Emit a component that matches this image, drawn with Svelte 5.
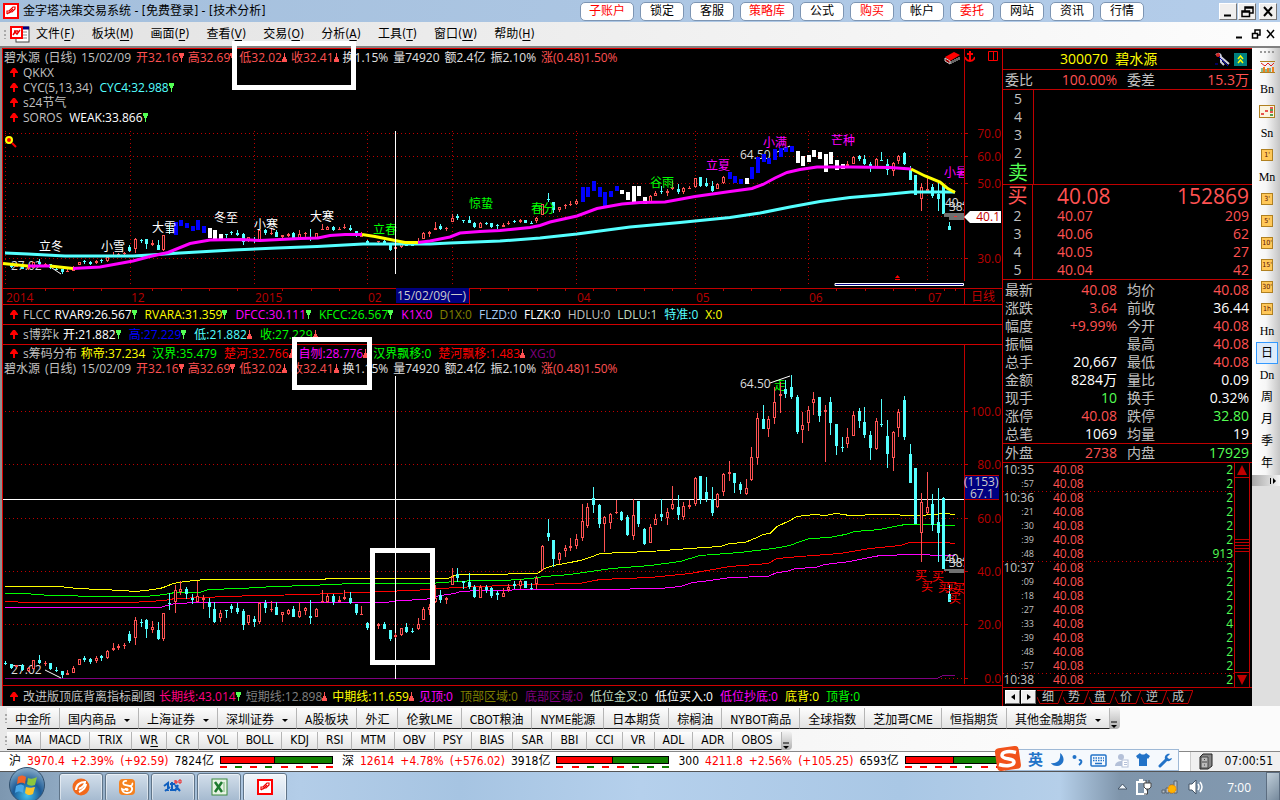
<script>
  const shortcuts = [
    ['子账户', 1], ['锁定', 0], ['客服', 0], ['策略库', 1], ['公式', 0], ['购买', 1],
    ['帐户', 0], ['委托', 1], ['网站', 0], ['资讯', 0], ['行情', 0]
  ];
  const menus = [
    ['文件', 'F'], ['板块', 'M'], ['画面', 'P'], ['查看', 'V'], ['交易', 'O'],
    ['分析', 'A'], ['工具', 'T'], ['窗口', 'W'], ['帮助', 'H']
  ];

  const silver = '#c0c0c0', white = '#fff', coral = '#ff5252', lime = '#54ff54';
  const yellow = '#ff0', magenta = '#f0f', green = '#0f0', cyan = '#54ffff', red = '#f00';

  // Segment: text, colour, direction mark, mark colour
  const quoteLine = [
    ['碧水源', silver], ['(日线)', silver], ['15/02/09', silver],
    ['开32.16', coral, 'd', coral], ['高32.69', coral, 'd', coral],
    ['低32.02', coral, 'u', coral], ['收32.41', coral, 'u', coral],
    ['换1.15%', '#e0e0e0'], ['量74920', '#e0e0e0'], ['额2.4亿', '#e0e0e0'],
    ['振2.10%', '#e0e0e0'], ['涨(0.48)1.50%', coral]
  ];
  const mainLines = [
    [['QKKX', silver]],
    [['CYC(5,13,34)', silver], ['CYC4:32.988', cyan, 'd', lime]],
    [['s24节气', silver]],
    [['SOROS', silver], ['WEAK:33.866', white, 'd', lime]]
  ];
  const flccLine = [
    ['FLCC', silver], ['RVAR9:26.567', white, 'd', lime], ['RVARA:31.359', yellow, 'd', lime],
    ['DFCC:30.111', magenta, 'd', lime], ['KFCC:26.567', green, 'd', lime], ['K1X:0', magenta],
    ['D1X:0', '#808000'], ['FLZD:0', '#a6caf0'], ['FLZK:0', white], ['HDLU:0', silver],
    ['LDLU:1', '#c0dcc0'], ['特准:0', cyan], ['X:0', yellow]
  ];
  const boyiLine = [
    ['s博弈k', silver], ['开:21.882', white, 'd', lime], ['高:27.229', '#00f', 'd', lime],
    ['低:21.882', cyan, 'u', coral], ['收:27.229', green, 'u', coral]
  ];
  const chipLine = [
    ['s筹码分布', silver], ['称帝:37.234', yellow], ['汉界:35.479', green],
    ['楚河:32.766', red, 'u', coral], ['自刎:28.776', magenta, 'u', coral],
    ['汉界飘移:0', green], ['楚河飘移:1.483', red, 'u', coral], ['XG:0', '#800080']
  ];
  const bottomLine = [
    ['改进版顶底背离指标副图', silver], ['长期线:43.014', '#ff0080', 'd', lime],
    ['短期线:12.898', '#808080', 'u', coral], ['中期线:11.659', yellow, 'u', coral],
    ['见顶:0', magenta], ['顶部区域:0', '#808000'], ['底部区域:0', '#800080'],
    ['低位金叉:0', '#c0dcc0'], ['低位买入:0', white], ['低位抄底:0', magenta],
    ['底背:0', yellow], ['顶背:0', green]
  ];

  // Daily bars on the lower pane: index, high, low, body top, body bottom, rising/falling
  const raw = `0 661 665 663 664 c;1 664 669 664 668 c;2 665 667 665 667 r;3 664 671 665 670 c;4 667 672 668 671 r;5 660 669 660 669 r;6 655 664 660 663 c;7 661 666 663 664 r;8 663 670 663 669 c;9 667 672 670 671 c;10 671 678 671 675 c;11 670 675 673 675 r;12 666 673 668 673 r;13 659 665 659 665 r;14 656 662 658 660 c;15 658 664 659 662 c;16 656 663 658 661 r;17 655 661 656 658 c;18 650 659 651 658 r;19 643 651 648 650 r;20 644 650 646 648 r;21 643 649 645 646 r;22 631 643 634 641 c;23 617 645 620 638 r;24 619 627 622 623 c;25 619 638 620 629 c;26 621 633 627 630 r;27 622 640 630 639 c;28 613 641 613 639 r;29 593 610 603 604 c;30 585 613 590 602 r;31 581 595 589 592 r;32 587 599 589 594 c;33 594 604 598 600 c;34 581 602 596 602 r;35 595 609 598 600 r;36 598 618 602 607 c;37 602 623 609 622 c;38 610 622 613 618 r;39 610 618 610 611 c;40 604 613 606 609 c;41 603 614 608 612 c;42 609 630 611 625 c;43 615 625 615 623 r;44 616 627 619 622 c;45 602 624 603 622 r;46 600 613 603 608 c;47 601 612 609 610 r;48 602 615 607 615 c;49 612 622 612 615 r;50 609 615 610 614 r;51 606 617 609 617 c;52 602 618 611 617 r;53 607 615 608 611 r;54 600 624 616 618 c;55 608 617 609 617 r;56 590 603 601 602 r;57 594 603 596 602 r;58 594 605 596 602 c;59 596 602 600 602 r;60 590 600 597 599 r;61 592 604 598 603 c;62 604 615 604 613 c;63 606 615 614 615 r;64 622 630 623 628 c;66 623 629 624 626 r;67 622 629 624 629 c;68 630 641 630 639 c;69 633 638 635 637 r;70 628 636 628 635 r;71 623 633 627 632 c;72 628 633 631 632 c;73 618 630 624 629 r;74 607 620 609 620 r;75 604 615 607 610 r;76 585 603 598 602 r;77 590 603 595 600 c;78 597 604 598 600 r;79 568 585 577 585 r;80 568 582 574 578 c;81 581 589 581 583 c;82 573 589 582 587 c;83 585 598 587 597 c;84 585 598 587 598 r;85 585 593 587 590 c;86 587 598 588 596 c;87 591 600 593 595 c;88 588 597 593 597 r;89 584 592 587 590 r;90 581 589 584 586 c;91 579 589 581 586 r;92 581 588 581 588 c;93 583 590 588 589 c;94 576 589 578 584 r;95 545 571 546 570 r;96 519 541 533 537 c;97 540 567 540 559 c;98 552 564 553 560 r;99 545 557 548 551 r;100 538 551 546 548 r;101 534 549 539 546 r;102 504 541 521 538 r;103 503 528 507 526 r;104 487 513 498 505 c;105 504 528 505 524 c;106 516 552 517 524 r;107 513 529 514 523 r;108 500 514 512 513 r;109 511 521 512 520 c;110 515 536 517 535 c;111 499 540 515 536 r;112 501 527 501 524 c;113 528 545 529 544 c;114 524 543 527 543 r;115 514 525 519 525 r;116 499 521 514 517 c;117 508 525 512 518 r;118 486 510 504 509 r;119 495 520 507 515 c;120 502 520 506 517 r;121 500 509 505 507 r;122 477 506 478 504 r;123 476 504 476 499 c;124 477 502 492 499 c;125 487 516 499 513 c;126 493 508 494 507 r;127 473 496 474 492 r;128 461 481 472 474 r;129 473 493 473 483 c;130 482 494 484 490 c;131 479 495 488 494 r;132 447 481 457 480 r;133 413 465 418 458 r;134 405 429 419 429 c;135 416 437 419 429 r;136 387 424 402 418 r;137 382 413 394 396 r;138 380 398 389 394 c;139 375 399 387 397 c;140 395 434 397 432 c;141 412 443 425 430 r;142 406 431 410 423 r;143 392 415 399 403 r;144 397 422 397 416 c;145 405 462 410 412 r;146 397 435 402 423 c;147 424 455 424 446 c;148 437 452 447 448 c;149 428 448 437 444 r;150 411 436 415 436 r;151 408 428 411 421 c;152 407 438 422 435 c;153 431 460 435 448 c;154 418 450 421 449 r;155 399 427 424 425 c;156 420 468 436 454 c;157 431 471 432 458 r;158 409 437 412 428 r;159 396 440 400 437 c;160 444 483 454 483 c;161 468 524 468 524 c;162 493 562 502 533 r;163 472 514 507 513 r;164 494 531 504 525 c;165 488 562 522 533 c;166 497 569 498 569 c;167 585 602 594 602 c`;

  const barX = (i) => Math.round(5.1 + i * 5.653) + 0.5;
  // The upper pane has a logarithmic price scale
  const logY = (y) => Math.round(258.5 - 147.6 * Math.log((27.02 + (678 - y) * 0.1237) / 30));
  const inRange = (i, ranges) => ranges.some(([a, b]) => i >= a && i <= b);
  const blueBars = [[30, 35], [102, 108], [128, 130], [132, 139]];
  const whiteBars = [[36, 38], [109, 113], [131, 131], [140, 148]];

  const bars = raw.split(';').map((row) => {
    const p = row.split(' ');
    const [i, hi, lo, top, bot] = p.slice(0, 5).map(Number);
    return { i, x: barX(i), hi, lo, top, bot: Math.max(bot, top + 1), up: p[5] === 'r' };
  });
  const logBars = bars.map((b) => {
    const top = logY(b.top);
    return {
      ...b, hi: logY(b.hi), lo: logY(b.lo), top, bot: Math.max(logY(b.bot), top + 1),
      solid: inRange(b.i, blueBars) ? '#00f' : inRange(b.i, whiteBars) ? '#fff' : ''
    };
  });

  const months = [5.5, 130.5, 254.5, 367.5, 452.5, 576.5, 695.5, 808.5, 927.5];
  const dateLabels = [[6, '2014'], [131, '12'], [255, '2015'], [368, '02'], [577, '04'], [696, '05'], [809, '06'], [928, '07']];
  const dateTicks = [45, 73, 101, 152, 181, 209, 237, 282, 311, 339, 480, 508, 537, 565, 593, 616, 644, 672, 723, 751, 780, 836, 865, 893, 915, 944, 955];
  const upperScale = [[133.5, '70.0'], [156.5, '60.0'], [183.5, '50.0'], [216.5, ''], [258.5, '30.0']];
  const lowerScale = [[411.5, '100.0'], [464.5, '80.0'], [518.5, '60.0'], [571.5, '40.0'], [624.5, '20.0'], [678.5, '0.0']];
  const terms = [
    [39, 251, '立冬', white], [101, 251, '小雪', white], [152, 232, '大雪', white], [214, 222, '冬至', white],
    [254, 229, '小寒', white], [310, 221, '大寒', white], [373, 234, '立春', green], [469, 208, '惊蛰', green],
    [531, 213, '春分', green], [650, 187, '谷雨', green], [706, 170, '立夏', magenta], [763, 147, '小满', magenta],
    [831, 145, '芒种', magenta], [944, 177, '小暑', magenta]
  ];
  const buys = [[915, 580], [932, 581], [921, 591], [938, 592], [945, 592], [953, 593], [949, 603]];

  const upperLines = [
    ['#54ffff', '5,253 28,254 65,256 133,256 150,255 180,253 233,250 277,248 317,246.5 363,244 430,244 450,243 500,241 540,238 577,234 630,227 680,222.5 730,217.5 760,213 790,207 820,201.5 850,197.5 880,195 911,192 955,192'],
    ['#ff0', '3,263.5 28,266'], ['#f0f', '28,266 50,266'], ['#ff0', '50,266 73,268.5'],
    ['#f0f', '73,268.5 100,267 133,261 150,256.5 168,252.5 190,243.5 210,240 240,239.5 260,240.5 300,238.5 318,238 330,235.5 345,234.5 362,234.5'],
    ['#ff0', '362,234.5 375,236.5 390,239.5 405,242.5 418,242.5'],
    ['#f0f', '418,242.5 430,241 450,237 460,233 480,231.5 500,230.5 530,227.5 540,225.5 550,222 577,216 597,208.5 622,204 640,202.5 665,202 695,196.5 730,191.5 752,188.5 763,184.5 775,178 787,172.5 800,169.5 817,167 850,167 890,167.5 911,169'],
    ['#ff0', '911,169 925,176 940,182 947,188 955,192.5']
  ];
  const lowerLines = [
    ['#ff0', '5,586 60,586 77,588 100,589 123,590 135,591 145,590 160,588 166,586 173,583 185,581 205,579 325,579 326,578 448,578 457,574 480,574 537,573 545,568 553,565 565,563 580,560 590,557 600,553 650,551 690,548 720,546 730,543 745,542 757,537 763,534 770,533 777,526 790,520 797,516 815,514 825,515 836,513 850,515 880,514 920,515 945,513 955,514'],
    ['#0f0', '5,593 25,593 50,595 105,596 145,596 165,594 175,592 200,592 208,589 240,588 275,586 310,585 330,584 355,583 430,583 455,581 480,580 505,580 530,578 545,576 570,574 590,571 612,568 650,565 680,561 700,555 740,552 765,549 780,547 790,545 800,541 810,538 830,537 845,534 855,531 880,529 905,524 925,524 955,525'],
    ['#f00', '5,601 30,602 130,602 165,600 175,598 205,597 225,596 260,595 310,594 330,593 385,591 410,590 430,589 455,587 480,586 530,584 580,583 600,579 650,577 690,573 730,566 768,563 777,558 800,556 840,553 870,548 900,545 910,542 945,542 955,543'],
    ['#f0f', '5,607 160,607 167,605 175,603 200,602 385,602 400,600 425,599 440,595 455,593 460,591 480,590 545,589 600,589 660,588 680,586 693,582 710,580 730,577 768,576 777,572 787,571 795,568 815,567 825,564 850,561 880,555 915,554 945,555 955,555'],
    ['#800080', '5,678 937,678 943,675 955,675']
  ];

  const bids = [['2', '40.07', '209'], ['3', '40.06', '62'], ['4', '40.05', '27'], ['5', '40.04', '42']];
  const stats = [
    ['最新', '40.08', 'up', '均价', '40.08', 'up'], ['涨跌', '3.64', 'up', '前收', '36.44', 'flat'],
    ['幅度', '+9.99%', 'up', '今开', '40.08', 'up'], ['振幅', '', 'up', '最高', '40.08', 'up'],
    ['总手', '20,667', 'flat', '最低', '40.08', 'up'], ['金额', '8284万', 'flat', '量比', '0.09', 'flat'],
    ['现手', '10', 'down', '换手', '0.32%', 'flat'], ['涨停', '40.08', 'up', '跌停', '32.80', 'down'],
    ['总笔', '1069', 'flat', '均量', '19', 'flat']
  ];
  const ticks = [
    ['10:35', '2'], [':57', '2'], ['10:36', '2'], [':21', '2'], [':30', '2'], [':39', '2'], [':48', '913'],
    ['10:37', '2'], [':09', '2'], [':18', '2'], [':27', '2'], [':33', '4'], [':39', '2'], [':48', '2'],
    [':57', '2'], ['10:38', '2']
  ];
  const periods = ['~chart', 'Bn', '~table', 'Sn', "#1'", 'Mn', "#3'", "#5'", "#10'", "#15'", "#30'", '#1h', 'Hn', '日', 'Dn', '周', '月', '季', '年'];

  const markets = [
    ['中金所'], ['国内商品', 1], ['上海证券', 1], ['深圳证券', 1], ['A股板块'], ['外汇'], ['伦敦LME'], ['CBOT粮油'],
    ['NYME能源'], ['日本期货'], ['棕榈油'], ['NYBOT商品'], ['全球指数'], ['芝加哥CME'], ['恒指期货'], ['其他金融期货', 1]
  ];
  const indicators = ['MA', 'MACD', 'TRIX', 'WR', 'CR', 'VOL', 'BOLL', 'KDJ', 'RSI', 'MTM', 'OBV', 'PSY', 'BIAS', 'SAR', 'BBI', 'CCI', 'VR', 'ADL', 'ADR', 'OBOS'];
  const indices = [
    ['沪', '3970.4', '+2.39%', '(+92.59)', '7824亿', 49, 'rgrgrrrr'],
    ['深', '12614', '+4.78%', '(+576.02)', '3918亿', 50, 'rrgrrggg'],
    ['300', '4211.8', '+2.56%', '(+105.25)', '6593亿', 43, 'rrrrgrrr']
  ];
</script>

{#snippet line(segs, kind)}
  <div class="line {kind}">
    {#if kind !== 'plain'}
      <svg class="arrow" width="8" height="9" viewBox="0 0 8 9"><path d="M3 0H5L8 4V5H5V9H3V5H0V4Z" fill="#f00" /></svg>
    {/if}
    {#each segs as [text, color, mark, markColor]}
      <span class:marked={mark} style:color>{text}{#if mark}<svg width="5" height="9" viewBox="0 0 5 9">
            {#if mark === 'd'}<path d="M0 0H5V3H4V5H3V9H2V5H1V3H0Z" fill={markColor} />{/if}
            {#if mark === 'u'}<path d="M2 0H3V4H4V6H5V9H0V6H1V4H2Z" fill={markColor} />{/if}
          </svg>{/if}</span>
    {/each}
  </div>
{/snippet}

{#snippet logo(size)}
  <svg width={size} height={size} viewBox="0 0 16 16">
    <rect width="16" height="16" fill="#f00" /><rect x="2" y="2" width="12" height="12" fill="#fff" />
    <path d="M4 11V8H6L10 4H12V6L9 9H7L4 11" fill="none" stroke="#e00" stroke-width="1.2" />
    <path d="M6 10L10 6" stroke="#e00" stroke-width="1.5" />
  </svg>
{/snippet}

{#snippet candles(list)}
  {#each list as b}
    {#if b.solid}
      <rect x={b.x - 1.5} y={b.hi} width="4" height={b.lo - b.hi} fill={b.solid} />
    {:else if b.up}
      <path d="M{b.x} {b.hi}V{b.top}M{b.x} {b.bot}V{b.lo}" stroke="#ff5252" />
      {#if b.bot - b.top < 3}
        <rect x={b.x - 1.5} y={b.top} width="3" height={b.bot - b.top} fill="#ff5252" />
      {:else}
        <rect x={b.x - 1} y={b.top + 0.5} width="2" height={b.bot - b.top - 1} fill="#000" stroke="#ff5252" />
      {/if}
    {:else}
      <path d="M{b.x} {b.hi}V{b.lo}" stroke="#54ffff" />
      <rect x={b.x - 1.5} y={b.top} width="3" height={b.bot - b.top} fill="#54ffff" />
    {/if}
  {/each}
{/snippet}

<main>
  <header class="title">
    {@render logo(16)}
    <h1>金字塔决策交易系统 - [免费登录] - [技术分析]</h1>
    <nav class="shortcuts">
      {#each shortcuts as [name, hot]}<button class:hot={hot}>{name}</button>{/each}
    </nav>
    <div class="window-buttons">
      <button aria-label="最小化"><svg width="16" height="15"><path d="M4 11.500H11" stroke="#000" stroke-width="2" /></svg></button>
      <button aria-label="还原"><svg width="16" height="15"><path d="M6 7V3H14V9H11M6 4H14M3 7H10.500V12.500H3ZM3 8H11" fill="none" stroke="#000" stroke-width="1.500" /></svg></button>
      <button class="apart" aria-label="关闭"><svg width="16" height="15"><path d="M4 3L12 12M12 3L4 12" stroke="#000" stroke-width="2" /></svg></button>
    </div>
  </header>

  <nav class="menu">
    <i class="grip"></i>
    <svg width="20" height="17" viewBox="0 0 20 17">
      <rect x="6" y="1" width="13" height="15" fill="#fff" stroke="#444" /><path d="M5 2H19" stroke="#000080" stroke-width="3" />
      <path d="M13 6H17M13 9H17M13 12H17" stroke="#888" />
      <rect x="1" y="1" width="11" height="11" fill="#fff" stroke="#f00" stroke-width="2" />
      <path d="M3 9L5 6L7 8L10 4M4 5H8" stroke="#e00" fill="none" stroke-width="1.500" />
    </svg>
    <div class="menu-items">
      {#each menus as [name, key]}<button>{name}(<u>{key}</u>)</button>{/each}
    </div>
    <svg class="mdi" width="40" height="12" viewBox="0 0 40 12">
      <path d="M1 9.500H7" stroke="#000" stroke-width="2" />
      <path d="M20 5V2H25V7H23M17.500 5.500H22.500V10H17.500ZM20 2H25" fill="none" stroke="#000" stroke-width="1.500" />
      <path d="M32 2L39 10M39 2L32 10" stroke="#000" stroke-width="1.500" />
    </svg>
  </nav>

  <div class="workspace">
    <section class="chart">
      <div class="head">
        <div class="head-lines">
          {@render line(quoteLine, 'plain')}
          {#each mainLines as segs}{@render line(segs, 'main')}{/each}
          <svg class="chip" width="17" height="13" viewBox="0 0 17 13">
            <path d="M1 5L10 0L16 3L6 9Z" fill="#f00" /><path d="M1 6V9L6 12V9ZM7 9V12M9 8V11M11 7V10M13 6V9M15 5V8" stroke="#ccc" fill="#900" />
          </svg>
        </div>
        <div class="head-side">
          <svg width="10" height="11" viewBox="0 0 10 11"><path d="M5 0V10M2 3H8M0 6C1 9 3 10 5 10S9 9 10 6" fill="none" stroke="#f00" stroke-width="2" /></svg>
          <svg width="10" height="10" viewBox="0 0 10 10"><path d="M.5.5H9.500V9.500H.5ZM5.500 0V10" fill="none" stroke="#f00" /></svg>
        </div>
      </div>

      <svg class="plot" viewBox="3 126 999 178" role="img" aria-label="日线主图">
        <g stroke="#c00000" stroke-dasharray="1 3">
          {#each upperScale as [y]}<path d="M5 {y}H964" />{/each}
          {#each months as x}<path d="M{x} 131V287" />{/each}
        </g>
        <g stroke="#c00000">
          <path d="M3 288.500H1002M964.500 126V281M964.500 289V304" />
          {#each upperScale as [y]}<path d="M964 {y}H968" />{/each}
          {#each dateTicks as x}<path d="M{x + 0.5} 288V291" />{/each}
        </g>
        <g fill="#b80000">
          {#each upperScale as [y, label]}<text x="1001" y={y + 4} text-anchor="end">{label}</text>{/each}
          {#each dateLabels as [x, label]}<text {x} y="302">{label}</text>{/each}
          <text x="971" y="301" fill="#c00000">日线</text>
        </g>
        <circle cx="9" cy="140" r="3" fill="#f00" stroke="#ff0" stroke-width="2" /><path d="M12 143L16 147" stroke="#f00" stroke-width="2" />
        <text x="11" y="270" fill="#ddd">27.02</text>
        <text x="740" y="159" fill="#ddd">64.50</text>
        <path d="M49 266L61 274M775 153L790 146" stroke="#fff" />
        {@render candles(logBars)}
        {#each upperLines as [color, points]}<polyline {points} fill="none" stroke={color} stroke-width="3" />{/each}
        <svg x="3" y="126" width="961" height="178" viewBox="3 126 961 178">
          {#each terms as [x, y, label, fill]}<text {x} {y} {fill}>{label}</text>{/each}
          <text x="945" y="207" fill="#ddd">40.4</text><text x="949" y="211" fill="#ddd">38.</text>
        </svg>
        <path d="M944 213H964V220H949V217H944Z" fill="#707070" /><path d="M954 216.500H957" stroke="#f33" />
        <path d="M395.500 131V274" stroke="#fff" />
        <path d="M835 283.500H963.500V285.500H835Z" fill="#000080" stroke="#fff" />
        <path d="M895 278L897.500 275L900 278ZM895 279H900V280H895Z" fill="#f00" />
        <path d="M964 217L970 211H1001V223H970Z" fill="#fff" /><text x="1000" y="221" fill="#c00000" text-anchor="end">40.1</text>
        <rect x="396" y="288" width="73" height="15" fill="#000080" /><path d="M469.500 288V304" stroke="#c00000" />
        <text x="397" y="300" fill="#ccc">15/02/09(一)</text>
      </svg>

      <div class="band">{@render line(flccLine, 'loose')}</div>
      <div class="band">{@render line(boyiLine, 'loose')}</div>
      <div class="band double">
        <div class="double-lines">{@render line(chipLine, 'dense')}{@render line(quoteLine, 'plain')}</div>
        <div class="double-side"></div>
      </div>

      <svg class="plot" viewBox="3 376 999 309" role="img" aria-label="筹码分布副图">
        <g stroke="#c00000">
          <g stroke-dasharray="1 3">{#each lowerScale as [y]}<path d="M5 {y}H964" />{/each}</g>
          <path d="M964.500 376V684" />
          {#each lowerScale as [y]}<path d="M964 {y}H968" />{/each}
        </g>
        {#each lowerScale as [y, label]}<text x="1001" y={y + 4} text-anchor="end" fill="#b80000">{label}</text>{/each}
        <g shape-rendering="crispEdges">
          {#each lowerLines as [color, points]}<polyline {points} fill="none" stroke={color} transform="translate(0 .5)" />{/each}
        </g>
        <path d="M3 499.500H964M395.500 376V679" stroke="#fff" />
        <text x="11" y="674" fill="#ddd">27.02</text><text x="740" y="388" fill="#ddd">64.50</text>
        <text x="774" y="390" fill={green}>走</text>
        <path d="M45 670L61 678M770 383L790 376" stroke="#fff" />
        {@render candles(bars)}
        <svg x="3" y="376" width="961" height="309" viewBox="3 376 961 309">
          {#each buys as [x, y]}<text {x} {y} fill="#f00">买</text>{/each}
          <text x="945" y="563" fill="#ddd">40.4</text><text x="949" y="567" fill="#ddd">38.</text>
        </svg>
        <path d="M944 569H964V573H949V571H944Z" fill="#707070" />
        <rect x="965" y="475" width="34" height="25" fill="#000080" /><path d="M965 475.500H999M965 499.500H999" stroke="#c00000" />
        <text x="964" y="486" fill="#ccc">(1153)</text><text x="970" y="498" fill="#ccc">67.1</text>
        <rect x="372.500" y="550.500" width="60" height="112" fill="none" stroke="#fff" stroke-width="5" />
      </svg>

      <div class="band last">{@render line(bottomLine, 'dense')}</div>
      <div class="mark-box first"></div>
      <div class="mark-box second"></div>
    </section>

    <aside class="quote">
      <div class="symbol">
        <span></span><h2>300070&nbsp; 碧水源</h2>
        <svg width="38" height="15" viewBox="0 0 38 15">
          <path d="M2 3C5 0 7 3 7 5L15 12M7 5V10L10 13" stroke="#ccd" stroke-width="2" fill="none" /><path d="M4 4L14 14M1 12H4" stroke="#0000c0" fill="none" /><circle cx="4" cy="3" r="2" fill="#d02020" />
          <rect x="20" y="1" width="13" height="13" fill="#008080" /><path d="M24 7L26.500 4L29 7M24 11L26.500 8L29 11" stroke="#ff0" stroke-width="1.500" fill="none" />
        </svg>
      </div>
      <div class="pair committee"><span>委比</span><b class="up">100.00%</b><span>委差</span><b class="up">15.3万</b></div>
      <div class="asks">
        <div class="levels"><span>5</span><span>4</span><span>3</span><span>2</span><span class="sell">卖</span></div>
      </div>
      <div class="bids">
        <div class="bid top"><span>买</span><b>40.08</b><b>152869</b></div>
        {#each bids as [n, p, v]}<div class="bid"><span>{n}</span><b>{p}</b><b>{v}</b></div>{/each}
      </div>
      <div class="stats">
        {#each stats as [a, av, ac, b, bv, bc]}
          <div class="pair"><span>{a}</span><b class={ac}>{av}</b><span>{b}</span><b class={bc}>{bv}</b></div>
        {/each}
      </div>
      <div class="pair totals"><span>外盘</span><b class="up">2738</b><span>内盘</span><b class="down">17929</b></div>
      <div class="tape">
        <table>
          <tbody>
            {#each ticks as [t, v]}
              <tr class:minute={t[0] !== ':' && t !== '10:35'}>
                <td class="time" class:second={t[0] === ':'}>{t}</td><td class="price">40.08</td><td class="vol">{v}</td>
              </tr>
            {/each}
          </tbody>
        </table>
        <div class="scroll">
          <button aria-label="向上"><svg width="10" height="10" viewBox="0 0 10 10"><path d="M5 0L10 10H0Z" fill="#c00000" /></svg></button>
          <div class="thumb"></div>
          <button aria-label="向下"><svg width="10" height="10" viewBox="0 0 10 10"><path d="M0 0H10L5 10Z" fill="#c00000" /></svg></button>
        </div>
      </div>
      <nav class="sheet-tabs">
        <button class="step" aria-label="上一页"><svg width="4" height="6"><path d="M4 0V6L0 3Z" /></svg></button>
        <button class="step" aria-label="下一页"><svg width="4" height="6"><path d="M0 0V6L4 3Z" /></svg></button>
        <div class="sheets">
          {#each ['细', '势', '盘', '价', '逆', '成'] as s}
            <button><svg width="26" height="16" viewBox="0 0 26 16"><path d="M0 8L3 14.500H21L26 1M0 1.500H26" fill="none" stroke="#c00000" /></svg><span>{s}</span></button>
          {/each}
        </div>
      </nav>
    </aside>

    <aside class="periods">
      <div class="period-list">
        <i class="hgrip"></i>
        {#each periods as p}
          <button class:active={p === '日'} aria-label={p.replace(/[~#]/, '')}>
            {#if p === '~chart'}
              <svg width="15" height="12" viewBox="0 0 15 12"><path d="M0 .5H15M0 11.500H15" stroke="#b08020" /><path d="M1 2L5 5L8 2L11 5L14 2" fill="none" stroke="#e02020" /><path d="M2 7V11M6 8V11M10 7V11" stroke="#208020" /><path d="M4 6V11M8 7V11M13 6V11" stroke="#f08020" stroke-width="2" /></svg>
            {:else if p === '~table'}
              <svg width="16" height="13" viewBox="0 0 16 13"><rect x=".5" y=".5" width="15" height="12" fill="#fbf5df" stroke="#b08020" /><path d="M2 9H5M6 6H9M11 3H14M11 7H14" stroke="#e02020" stroke-width="1.500" /><path d="M11 5H14M11 10H14" stroke="#208020" stroke-width="1.500" /></svg>
            {:else if p[0] === '#'}
              <span class="minute-icon">{p.slice(1)}</span>
            {:else}{p}{/if}
          </button>
        {/each}
      </div>
      <div class="period-end"><svg width="7" height="6"><path d="M.5 0V6" stroke="#000" /><path d="M3 0V6L6 3Z" /></svg></div>
    </aside>
  </div>

  <nav class="tabs markets">
    <i class="grip"></i>
    {#each markets as [name, drop]}
      <button>{name}{#if drop}<svg width="6" height="3"><path d="M0 0H6L3 3Z" /></svg>{/if}</button>
    {/each}
    <span class="more"><svg width="7" height="8"><path d="M0 1H6" stroke="#000" /><path d="M0 4H6L3 7Z" /></svg></span>
  </nav>
  <nav class="tabs indicators">
    <i class="grip"></i>
    {#each indicators as name}
      <button>{#if name === 'WR'}<span>W<u>R</u></span>{:else}{name}{/if}</button>
    {/each}
    <span class="more"><svg width="7" height="8"><path d="M0 1H6" stroke="#000" /><path d="M0 4H6L3 7Z" /></svg></span>
  </nav>

  <footer class="status">
    {#each indices as [name, price, pct, diff, amount, share, dashes]}
      <div class="index">
        <span>{name}</span><em>{price}</em><em>{pct}</em><em>{diff}</em><span>{amount}</span>
        <div class="gauge">
          <div class="ratio"><div style:width="{share}%"></div></div>
          <div class="dashes">{#each dashes as d}<i class:g={d === 'g'}></i>{/each}</div>
        </div>
      </div>
    {/each}
    <div class="status-end">
      <svg width="14" height="17" viewBox="0 0 14 17"><path d="M1 4L4 1H13V13L9 16H1Z" fill="#888" stroke="#222" /><path d="M2 4H9V15H2ZM3 9H8M5 6.500H6M5 12H6" fill="#bbb" stroke="#444" /></svg>
      <time>07:00:51</time>
    </div>
    <div class="ime">
      <svg class="sogou" width="28" height="28" viewBox="0 0 28 28"><rect x="2" y="2" width="24" height="23" rx="4" fill="#f1521b" transform="rotate(-8 14 14)" /><path d="M22 7.500C16 6 8 6 8 10.500C8 15 20 12.500 20 17C20 21 12 21.500 5 19.500" fill="none" stroke="#fff" stroke-width="3.500" /></svg>
      <strong>英</strong>
      <svg width="14" height="14" viewBox="0 0 14 14"><path d="M9 0C15 4 13 13 6 13C3 13 1 12 0 10C7 11 10 6 9 0Z" fill="#2273c8" /></svg>
      <svg width="11" height="12" viewBox="0 0 11 12"><circle cx="2.500" cy="3" r="2" fill="#2273c8" /><path d="M7 6.500C9 5 11 8 7 11" fill="none" stroke="#2273c8" stroke-width="2" /></svg>
      <svg width="17" height="13" viewBox="0 0 17 13"><rect x="1" y="1" width="15" height="11" rx="1" fill="none" stroke="#2273c8" stroke-width="1.500" /><path d="M3 4H14M3 6.500H14" stroke="#2273c8" stroke-width="1.500" stroke-dasharray="1.500 1" /><path d="M5 9.500H12" stroke="#2273c8" stroke-width="1.500" /></svg>
      <svg width="14" height="15" viewBox="0 0 14 15"><circle cx="6" cy="4" r="3" fill="#b3c0d8" /><path d="M0 13C0 7 10 7 10 10V13Z" fill="#b3c0d8" /><rect x="7" y="7" width="6" height="7" fill="#fff" stroke="#b3c0d8" /><path d="M9 9.500H12M9 11.500H12" stroke="#b3c0d8" /></svg>
      <svg width="14" height="14" viewBox="0 0 14 14"><path d="M4 0C5 2 9 2 10 0L14 3L12 6L11 5V13H3V5L2 6L0 3Z" fill="#2273c8" /></svg>
      <svg width="15" height="15" viewBox="0 0 15 15"><path d="M2 13L8 7" stroke="#2273c8" stroke-width="3" stroke-linecap="round" /><path d="M12 1C9 0 6 3 7 6C8 9 13 9 14 5L11 6L9 4Z" fill="#2273c8" /></svg>
    </div>
  </footer>

  <footer class="taskbar">
    <button class="start" aria-label="开始">
      <svg width="40" height="38" viewBox="0 0 40 38">
        <defs><radialGradient id="orb" cx=".5" cy=".8" r=".8"><stop offset="0" stop-color="#3fc0f0" /><stop offset=".5" stop-color="#1c5a96" /><stop offset="1" stop-color="#8fb2cc" /></radialGradient></defs>
        <circle cx="20" cy="19" r="17.500" fill="url(#orb)" stroke="#31506e" />
        <path d="M11 11C14 9 16 9 19 11L18 18C15 16 13 17 10 18Z" fill="#f0642a" /><path d="M21 12C24 13 26 13 30 11L28 19C25 20 22 20 20 18Z" fill="#8cc63e" />
        <path d="M9 20C12 18 15 18 17 20L16 27C13 25 11 25 8 27Z" fill="#4aa8e8" /><path d="M19 21C22 22 24 22 28 21L26 28C23 30 20 29 18 27Z" fill="#fbc52c" />
      </svg>
    </button>
    <div class="apps">
      <button aria-label="应用"><svg width="18" height="18" viewBox="0 0 18 18"><circle cx="9" cy="9" r="8.500" fill="#f2691c" /><path d="M4 12C4 7 8 4 13 4C13 6 11 9 7 11M7 14C11 12 14 9 14 6" stroke="#fff" stroke-width="2" fill="none" /></svg></button>
      <button aria-label="UC"><svg width="18" height="18" viewBox="0 0 18 18"><rect x="1" y="1" width="16" height="16" rx="4" fill="#f58220" /><path d="M9 3C5 2 4 6 7 7L12 8C16 10 14 15 9 15C6 15 4 13 4 11C6 12 8 12 8 10M12 8C14 8 15 6 14 5" stroke="#fff" stroke-width="1.800" fill="none" /><circle cx="9" cy="11.500" r="1.500" fill="#fff" /></svg></button>
      <button aria-label="期货"><svg width="20" height="18" viewBox="0 0 20 18"><path d="M1 8L5 5V13M2 13L7 9M7 6H12M9 4V12M7 12H12M12 7L17 13M12 13L15 7" stroke="#1060c0" stroke-width="2" fill="none" /><path d="M12 2V5H14V3H12M16 2H18V5H16Z" stroke="#f02020" fill="none" /></svg></button>
      <button aria-label="Excel"><svg width="17" height="18" viewBox="0 0 17 18"><rect x="1" y="1" width="15" height="16" fill="#e8f3e4" stroke="#3b8a3e" /><path d="M4 4L11 14M11 4L4 14" stroke="#1e7a2e" stroke-width="2.500" /><path d="M13 4V14" stroke="#7ab87a" /></svg></button>
      <button class="current" aria-label="金字塔">{@render logo(16)}</button>
    </div>
    <div class="tray">
      <svg width="9" height="6"><path d="M0 5L4.500 0L9 5Z" fill="#eef4fa" stroke="#456" /></svg>
      <svg width="16" height="16" viewBox="0 0 16 16"><rect x="1" y="3" width="8" height="12" fill="none" stroke="#fff" stroke-width="2" /><path d="M3 1H7" stroke="#fff" stroke-width="2" /><path d="M8 4H15V8L13 10H10L8 8ZM10 1V4M13 1V4M11.500 10V15H8" fill="#fff" stroke="#444" /></svg>
      <svg width="18" height="16" viewBox="0 0 18 16"><path d="M1 14V11H4V14ZM5 14V9H8V14ZM9 14V6H12V14ZM13 14V2H16V14Z" fill="#b8c0c8" stroke="#59636d" /><circle cx="11" cy="10" r="4" fill="#ffb400" stroke="#f08a00" stroke-dasharray="2 1" /></svg>
      <svg width="16" height="16" viewBox="0 0 16 16"><path d="M1 5H4L8 1V15L4 11H1Z" fill="#fff" stroke="#456" /><path d="M10 5Q12 8 10 11M12 3Q16 8 12 13" fill="none" stroke="#fff" stroke-width="1.500" /></svg>
      <time>7:00</time>
      <button class="desktop" aria-label="显示桌面"></button>
    </div>
  </footer>
</main>

<style>
  :global(body) { margin: 0; background: #dfdfdf; }
  main {
    display: flex; flex-direction: column; font: 12px/15px "DejaVu Sans Condensed", "Noto Sans CJK SC", sans-serif; color: #000;
    overflow: hidden;
  }
  button { font: inherit; color: inherit; background: none; border: 0; padding: 0; margin: 0; }
  h1, h2 { margin: 0; font: inherit; white-space: nowrap; }
  b, em { font-weight: normal; font-style: normal; }
  svg { flex: none; display: block; }

  .title {
    display: flex; align-items: center; height: 22px; padding: 0 3px; box-sizing: border-box;
    background: linear-gradient(90deg, #a4bfdc, #b4cdea);
  }
  .title h1 { flex: 1; margin-left: 4px; }
  .shortcuts { display: flex; gap: 6px; margin-right: 75px; }
  .shortcuts button {
    height: 19px; min-width: 44px; padding: 0 8px; background: #fff; border: 1px solid #7d95b3; border-radius: 5px; white-space: nowrap;
  }
  .shortcuts .hot { color: #f00; }
  .window-buttons { display: flex; gap: 1px; }
  .window-buttons button {
    width: 18px; height: 17px; background: #f0efee; border: 1px solid; border-color: #fff #777 #777 #fff;
  }
  .window-buttons .apart { margin-left: 2px; }

  .grip { flex: none; width: 2px; height: 9px; background: repeating-linear-gradient(#aaa 0 2px, transparent 2px 4px); }
  .menu {
    display: flex; align-items: center; height: 24px; padding: 0 5px 0 4px; border-bottom: 2px solid #808080;
    background: linear-gradient(90deg, #e2e2e2, #fdfdfd);
  }
  .menu > svg:first-of-type { margin-left: 4px; }
  .menu-items { flex: 1; display: flex; gap: 17px; margin-left: 6px; }
  .menu-items button { white-space: nowrap; }
  u { text-underline-offset: 2px; }

  .workspace { display: flex; padding-left: 2px; background: #909090; }
  .chart {
    flex: 1; min-width: 0; position: relative; background: #000; border: solid #e00000; border-width: 1px 0 0 1px;
    font-family: "Open Sans", "Noto Sans CJK SC", sans-serif;
  }
  .head, .double { display: flex; }
  .head-lines { flex: 1; min-width: 0; padding: 1px 0; border-right: 1px solid #c00000; position: relative; }
  .head-side { flex: none; width: 37px; display: flex; justify-content: space-between; box-sizing: border-box; padding: 2px 4px 0 0; }
  .chip { position: absolute; right: 3px; top: 3px; }
  .line { display: flex; align-items: center; height: 15px; padding-left: 7px; white-space: nowrap; line-height: 15px; }
  .line.plain { padding-left: 1px; }
  .line .arrow { margin-right: 5px; }
  .line span { display: flex; align-items: center; margin-right: 7px; }
  .line span.marked { margin-right: 5px; }
  .line span:first-of-type { margin-right: 4px; }
  .plain span, .plain span:first-of-type { margin-right: 5px; }
  .plain span.marked { margin-right: 4px; }
  .loose span.marked { margin-right: 8px; }
  .main span:first-of-type { margin-right: 7px; }
  .plot { width: 100%; height: auto; font-size: 12px; overflow: visible; }
  .band { border-top: 1px solid #d00000; height: 19px; display: flex; align-items: center; overflow: hidden; }
  .band.double { height: auto; align-items: stretch; }
  .double-lines { flex: 1; min-width: 0; padding-top: 1px; border-right: 1px solid #c00000; }
  .double-side { flex: none; width: 37px; }
  .band.last { height: 20px; }
  .mark-box { position: absolute; border: 5px solid #fff; box-sizing: border-box; }
  .mark-box.first { left: 229px; top: -8px; width: 124px; height: 49px; }
  .mark-box.second { left: 289px; top: 288px; width: 80px; height: 53px; }

  .quote {
    flex: none; width: 249px; display: flex; flex-direction: column; background: #000; color: #c0c0c0;
    border: solid #d00000; border-width: 1px 0 0 1px; font: 14px/18px "Open Sans", "Noto Sans CJK SC", sans-serif;
  }
  .symbol { display: grid; grid-template-columns: 57px 1fr auto; align-items: center; height: 20px; color: #ff0; border-bottom: 1px solid #c00000; }
  .pair { display: grid; grid-template-columns: 30px 82px 40px 1fr; padding: 0 3px 0 2px; height: 18px; align-items: center; white-space: nowrap; }
  .pair b { text-align: right; }
  .pair span:nth-of-type(2) { padding-left: 10px; }
  .pair.committee { height: 19px; border-bottom: 1px solid #c00000; }
  .up { color: #ff5252; }
  .down { color: #54ff54; }
  .flat { color: #fff; }
  .asks { border-bottom: 1px solid #c00000; }
  .levels { width: 30px; border-right: 1px solid #c00000; display: flex; flex-direction: column; text-align: center; }
  .levels .sell { font-size: 20px; line-height: 22px; color: #54ff54; }
  .bids { border-bottom: 1px solid #c00000; }
  .bid { display: grid; grid-template-columns: 30px 1fr auto; padding-right: 3px; color: #ff5252; line-height: 18px; }
  .bid span { border-right: 1px solid #c00000; text-align: center; color: #c0c0c0; }
  .bid b:first-of-type { padding-left: 24px; }
  .bid.top { font-size: 21px; line-height: 22px; }
  .bid.top span { color: #ff5252; font-size: 20px; }
  .stats { padding: 1px 0 0; border-bottom: 1px solid #c00000; }
  .pair.totals { border-bottom: 1px solid #c00000; }
  .tape { display: flex; padding-right: 2px; border-bottom: 1px solid #c00000; }
  table { flex: 1; border-collapse: collapse; font-size: 12px; line-height: 14px; }
  td { padding: 0; height: 14px; }
  .minute td { background: repeating-linear-gradient(90deg, #c00000 0 1px, transparent 1px 4px) top / 100% 1px no-repeat; }
  .time { width: 31px; text-align: right; }
  .time.second { font-size: 9px; }
  .price { padding-left: 19px; color: #ff5252; }
  .vol { text-align: right; color: #54ff54; padding-right: 1px; }
  .scroll { width: 14px; border: solid #c00000; border-width: 0 1px; display: flex; flex-direction: column; justify-content: space-between; }
  .scroll button { height: 15px; display: grid; place-items: center; border: solid #c00000; border-width: 0 0 1px; }
  .scroll button:last-child { border-width: 1px 0 0; }
  .thumb { height: 13px; margin-bottom: 60px; background: repeating-linear-gradient(#c00000 0 1px, transparent 1px 3px); }
  .sheet-tabs { display: flex; flex: 1; padding: 0 2px; align-items: center; gap: 1px; }
  .step { width: 15px; height: 14px; background: #f0f0f0; border: 1px solid; border-color: #fff #777 #777 #fff; display: grid; place-items: center; }
  .sheets { display: flex; }
  .sheets button { display: grid; width: 26px; font-size: 12px; line-height: 16px; text-align: left; }
  .sheets button > * { grid-area: 1 / 1; }
  .sheets span { padding-left: 5px; }

  .periods { flex: none; width: 28px; background: #dfdfdf; }
  .period-list {
    display: flex; flex-direction: column; align-items: center; padding: 2px 0 1px 2px;
    background: linear-gradient(90deg, #fff, #f6f6f6 50%, #c4c4c4);
  }
  .hgrip { width: 15px; height: 2px; margin: 1px 0 3px; background: repeating-linear-gradient(90deg, #999 0 2px, transparent 2px 4px); }
  .period-list button { width: 22px; height: 22px; display: grid; place-items: center; box-sizing: border-box; font-size: 12px; border: 1px solid transparent; font-family: "Liberation Serif", "Noto Sans CJK SC", serif; }
  .period-list .active { background: #dcebfc; border-color: #3399ff; }
  .minute-icon {
    width: 10px; height: 10px; border: 1px solid #b08020; background: #ffc859; color: #601000;
    font: 7px/10px "DejaVu Sans Condensed", sans-serif; text-align: center;
  }
  .period-end { height: 11px; display: flex; align-items: center; justify-content: flex-end; padding-right: 3px; background: linear-gradient(90deg, #a8a8a8, #f4f4f4); }

  .tabs { display: flex; align-items: center; height: 22px; padding: 1px 0 1px 5px; background: linear-gradient(90deg, #e8e8e8, #fbfbfb 80%); }
  .tabs button {
    display: flex; align-items: center; gap: 8px; height: 21px; padding: 5px 8px 0; white-space: nowrap; box-sizing: border-box;
    border-right: 1px solid #b5b5b5; border-bottom: 1px solid #222; background: linear-gradient(#fdfdfd, #e2e2e2);
  }
  .indicators { height: 19px; border-bottom: 1px solid #888; }
  .indicators button { height: 18px; padding-top: 1px; }
  .more { align-self: stretch; width: 10px; display: grid; place-items: end center; background: linear-gradient(#f4f4f4, #b0b0b0); border-radius: 0 4px 4px 0; }

  .status { position: relative; display: flex; align-items: center; height: 19px; padding-left: 9px; background: #fff; border-bottom: 1px solid #555; }
  .index { display: flex; gap: 6px; align-items: center; margin-right: 9px; white-space: nowrap; }
  .index em { color: #f00; }
  .gauge { width: 113px; }
  .ratio { height: 6px; border: 1px solid #000; background: #108000; }
  .ratio div { height: 6px; background: #f00; box-sizing: border-box; border-right: 1px solid #000; }
  .dashes { display: flex; justify-content: space-between; margin-top: 2px; }
  .dashes i { width: 7px; height: 2px; background: #f00; }
  .dashes .g { background: #108000; }
  .status-end { margin-left: auto; display: flex; gap: 12px; padding: 0 7px 0 8px; background: #f0f0f0; align-items: center; align-self: stretch; position: relative; border-left: 1px solid #ccc; }
  .ime {
    position: absolute; right: 101px; bottom: 0; height: 22px; box-sizing: border-box; width: 174px; display: flex; align-items: center;
    justify-content: space-between; padding: 0 5px 0 22px; background: #f5f9fd; border: 1px solid #9fb9d6;
  }
  .ime strong { color: #2273c8; font-size: 15px; }
  .sogou { position: absolute; left: -12px; top: -5px; }

  .taskbar {
    display: flex; align-items: center; height: 30px;
    background: linear-gradient(90deg, #7d97b0 0, #8fa9c2 60px, #b3cde8 300px, #a6c4e2 460px, #b5d0ec 640px, #a9c7e5 900px, #b5cfe9 1060px, #7f95ab 1120px, #8299b0);
  }
  .start { margin: -6px 0 0 7px; height: 36px; width: 40px; overflow: visible; z-index: 1; }
  .apps { display: flex; gap: 2px; margin-left: 12px; }
  .apps button {
    width: 44px; height: 29px; box-sizing: border-box; display: grid; place-items: center;
    border: 1px solid #5f7488; border-radius: 3px; background: linear-gradient(#d3dfeb, #a4b9cf); box-shadow: inset 0 0 0 1px #ffffff80;
  }
  .apps .current { background: linear-gradient(#f2f6fa, #cfdeed); }
  .tray { margin-left: auto; display: flex; align-items: center; gap: 9px; color: #fff; align-self: stretch; }
  .tray time { margin: 0 6px 0 14px; font-family: "Open Sans", sans-serif; }
  .desktop { width: 14px; align-self: stretch; border: 1px solid #5c6d80; background: linear-gradient(135deg, #c0ced9, #74889b); }
</style>
